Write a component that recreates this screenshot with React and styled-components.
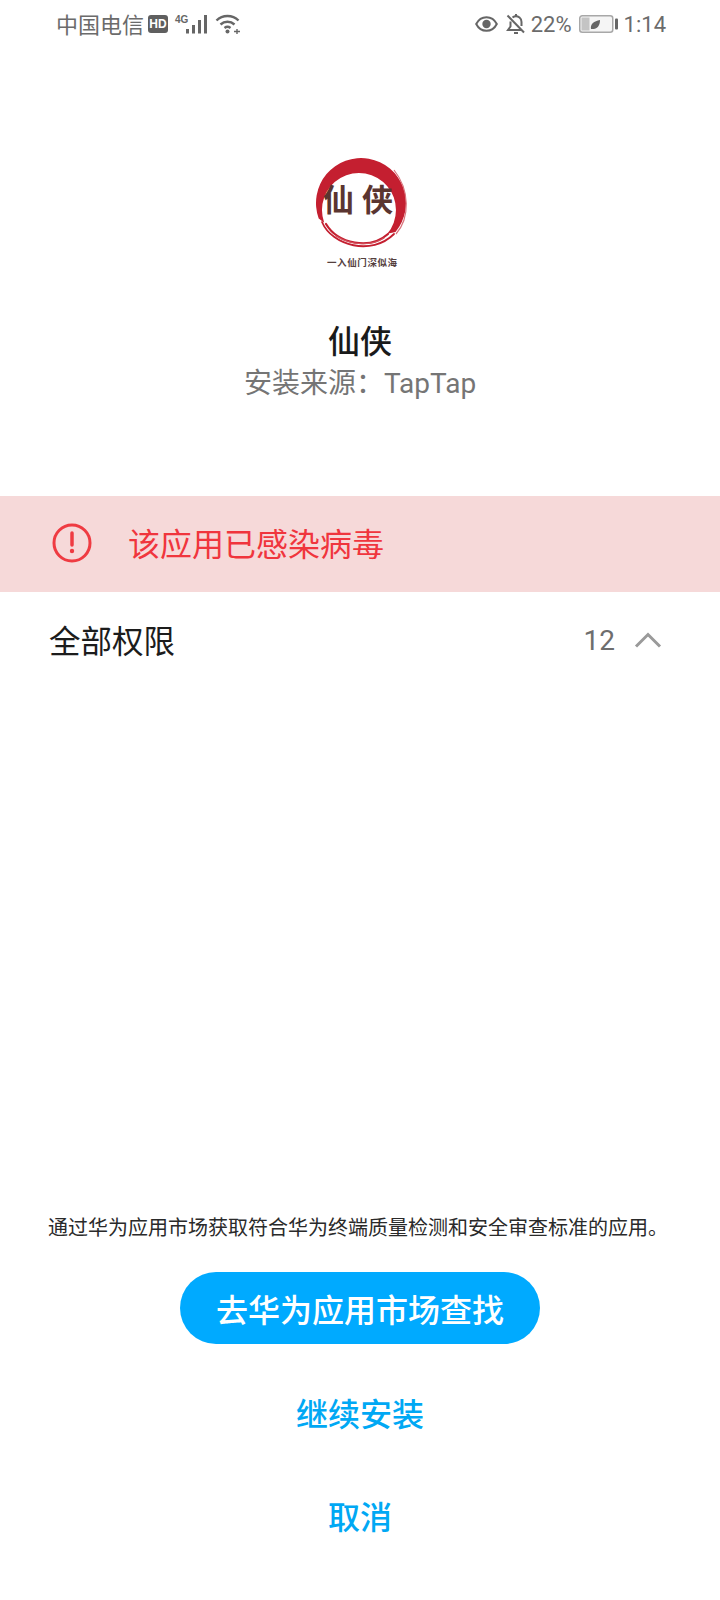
import React from "react";
import styled, { createGlobalStyle } from "styled-components";

const Global = createGlobalStyle`
  html, body { margin: 0; padding: 0; background: #fff; }
  body { font-family: "Roboto", "Noto Sans CJK SC", sans-serif; }
`;
const CJK = `"Roboto", "Noto Sans CJK SC", sans-serif`;

const Page = styled.div`
  width: 720px; height: 1600px; display: flex; flex-direction: column; background: #fff; overflow: hidden;
`;
const StatusBar = styled.div`
  height: 50px; box-sizing: border-box; display: flex; align-items: center; justify-content: space-between;
  padding: 0 54px 2px 56px; color: #6b6b6b; font-size: 22px; font-family: ${CJK};
`;
const StatusGroup = styled.div`display: flex; align-items: center;`;
const StatusIcon = styled.svg`margin-left: ${p => p.$ml || 0}px; flex: none;`;
const StatusText = styled.span`margin-left: ${p => p.$ml || 0}px;`;
const Carrier = styled.span`margin-bottom: 3px;`;
const Hd = styled.span`
  width: 20px; height: 18px; margin-left: 4px; border-radius: 3px; background: #5f5f5f; color: #fff;
  font: 700 12px "Liberation Sans", sans-serif; display: flex; align-items: center; justify-content: center;
`;
const Header = styled.div`
  height: 446px; display: flex; flex-direction: column; align-items: center; padding-top: 104px; box-sizing: border-box;
`;
const LogoWrap = styled.div`
  position: relative; width: 100px; height: 112px; margin-bottom: 56px;
`;
const LogoName = styled.div`
  position: absolute; left: -4px; top: 26px; width: 112px; text-align: center;
  font: 700 31px "Noto Sans CJK SC", sans-serif; color: #5a3530; letter-spacing: 8px; line-height: 36px;
`;
const LogoMotto = styled.div`
  position: absolute; left: 17px; top: 102px; white-space: nowrap;
  font: 700 9.5px "Noto Sans CJK SC", sans-serif; color: #55403e; line-height: 12px; letter-spacing: .6px;
`;
const Title = styled.div`
  font-size: 32px; font-weight: 500; color: #1a1a1a; line-height: 40px; font-family: ${CJK};
`;
const Source = styled.div`
  font-size: 28px; color: #757575; line-height: 40px; margin-top: 2px; font-family: ${CJK};
`;
const Banner = styled.div`
  height: 96px; box-sizing: border-box; background: #f6d9d9; display: flex; align-items: center;
  padding: 0 0 2px 52px; gap: 36px; color: #f0353d; font-size: 32px; font-family: ${CJK};
`;
const BannerText = styled.span`margin-bottom: 2px;`;
const Row = styled.div`
  height: 96px; display: flex; align-items: center; justify-content: space-between; padding: 0 58px 0 49px;
  font-family: ${CJK}; font-size: 31.5px; color: #1c1c1c;
`;
const RowLabel = styled.span`margin-bottom: 2px;`;
const RowRight = styled.div`
  display: flex; align-items: center; gap: 19px; color: #6e6e6e; font-size: 28px;
`;
const Spacer = styled.div`flex: 1;`;
const Footer = styled.div`
  display: flex; flex-direction: column; align-items: center; padding-bottom: 34px;
`;
const Notice = styled.div`
  width: 100%; box-sizing: border-box; padding-left: 48px; font-size: 20px; line-height: 28px; color: #2a2a2a;
  font-family: ${CJK}; margin-bottom: 30px; white-space: nowrap;
`;
const Primary = styled.div`
  width: 360px; height: 72px; border-radius: 36px; background: #00aaff; color: #fff;
  display: flex; align-items: center; justify-content: center; font-size: 32px; font-weight: 500;
  font-family: ${CJK}; margin-bottom: 16px;
`;
const TextBtn = styled.div`
  height: 103px; display: flex; align-items: center; justify-content: center; color: #00a8f4;
  font-size: 32px; font-weight: 500; font-family: ${CJK}; width: 100%;
`;

const Signal = () => (
  <StatusIcon $ml={6} width="33" height="20" viewBox="0 0 33 20">
    <text x="1" y="9" fontSize="10" fontWeight="700" fill="#666" fontFamily="Liberation Sans">4G</text>
    <g fill="#666">
      <rect x="12" y="15" width="3" height="4.500" /><rect x="18" y="11" width="3" height="8.500" />
      <rect x="24" y="6" width="3" height="13.500" /><rect x="30" y="1" width="3" height="18.500" />
    </g>
  </StatusIcon>
);
const Wifi = () => (
  <StatusIcon $ml={8} width="26" height="20" viewBox="0 0 26 20" fill="none" stroke="#666" strokeWidth="2.400">
    <path d="M1.500 6.500C7.500 .5 17.500 .5 23.500 6.500" />
    <path d="M5.500 10.500c4-3.600 10-3.600 14 0" />
    <path d="M9.500 14c1.800-1.400 4.200-1.400 6 0" />
    <circle cx="12.500" cy="17.500" r="2" fill="#666" stroke="none" />
    <path d="M19 17.500h6M22 15v5" strokeWidth="1.400" />
  </StatusIcon>
);
const Eye = () => (
  <StatusIcon width="23" height="16" viewBox="0 0 23 16">
    <path d="M1.200 8C3.500 3.500 7.500 1.200 11.500 1.200S19.500 3.500 21.800 8C19.500 12.500 15.500 14.800 11.500 14.800S3.500 12.500 1.200 8Z" fill="none" stroke="#666" strokeWidth="2" />
    <circle cx="11.500" cy="8" r="4.200" fill="#666" />
  </StatusIcon>
);
const BellOff = () => (
  <StatusIcon $ml={8} width="20" height="20" viewBox="0 0 20 20" fill="none" stroke="#666" strokeWidth="2">
    <path d="M4.500 7.500V12.500L2 16h13M6.500 3.500c2-1.600 5-1.600 7 0 1.500 1.200 2 2.800 2 4.500v4" />
    <path d="M10 0v2.500M8 19h4" />
    <path d="M1.500 1.500 18 18.500" />
  </StatusIcon>
);
const Battery = () => (
  <StatusIcon $ml={7} width="39" height="20" viewBox="0 0 39 20">
    <rect x=".75" y="1.750" width="33" height="16.500" rx="2.500" fill="#f5f5f5" stroke="#a8a8a8" strokeWidth="1.500" />
    <rect x="2.500" y="3.500" width="8" height="13" fill="#c4c4c4" />
    <path d="M12 15c-1-5 3-8 9-9 0 6-3 9.500-9 9Z" fill="#666" />
    <rect x="36" y="4.500" width="3" height="11" rx="1" fill="#666" />
  </StatusIcon>
);
const Logo = () => (
  <svg width="100" height="100" viewBox="0 0 100 100" fill="none">
    <path d="M8.700 64.400A45 45 0 1 1 85.500 77.900L77.300 79.800A37 37 0 1 0 14.200 68.700Z" fill="#c41f30" />
    <path d="M12 68C22 92 62 102 84 80" stroke="#c41f30" strokeWidth="1.800" strokeLinecap="round" />
    <path d="M16 70C28 90 60 96 78 80" stroke="#c41f30" strokeWidth="2.200" strokeLinecap="round" />
    <path d="M26 82C42 92 62 92 74 84" stroke="#d4505c" strokeWidth="1.200" strokeLinecap="round" />
    <path d="M84 16C100 36 100 64 86 80" stroke="#d9737c" strokeWidth="1.200" />
  </svg>
);
const Alert = () => (
  <svg width="40" height="40" viewBox="0 0 40 40" fill="none">
    <circle cx="20" cy="20" r="18" stroke="#ef3b42" strokeWidth="3" />
    <path d="M20 10v12" stroke="#ef3b42" strokeWidth="3.500" strokeLinecap="round" />
    <circle cx="20" cy="28" r="2.200" fill="#ef3b42" />
  </svg>
);
const Chevron = () => (
  <svg width="28" height="16" viewBox="0 0 28 16" fill="none">
    <path d="M2 14.500 14 2.500 26 14.500" stroke="#9a9a9a" strokeWidth="3" />
  </svg>
);

export default function App() {
  return (
    <Page>
      <Global />
      <StatusBar>
        <StatusGroup>
          <Carrier>中国电信</Carrier><Hd>HD</Hd><Signal /><Wifi />
        </StatusGroup>
        <StatusGroup>
          <Eye /><BellOff /><StatusText $ml={5}>22%</StatusText><Battery /><StatusText $ml={6}>1:14</StatusText>
        </StatusGroup>
      </StatusBar>
      <Header>
        <LogoWrap>
          <Logo />
          <LogoName>仙侠</LogoName>
          <LogoMotto>一入仙门深似海</LogoMotto>
        </LogoWrap>
        <Title>仙侠</Title>
        <Source>{"安装来源\uFF1ATapTap"}</Source>
      </Header>
      <Banner><Alert /><BannerText>该应用已感染病毒</BannerText></Banner>
      <Row>
        <RowLabel>全部权限</RowLabel>
        <RowRight><span>12</span><Chevron /></RowRight>
      </Row>
      <Spacer />
      <Footer>
        <Notice>通过华为应用市场获取符合华为终端质量检测和安全审查标准的应用。</Notice>
        <Primary>去华为应用市场查找</Primary>
        <TextBtn>继续安装</TextBtn>
        <TextBtn>取消</TextBtn>
      </Footer>
    </Page>
  );
}
